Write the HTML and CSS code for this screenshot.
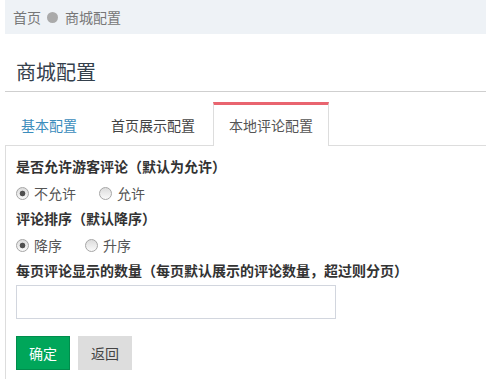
FILE: index.html
```html
<!DOCTYPE html>
<html lang="zh-CN">
<head>
    <meta charset="utf-8">
    <title>商城配置</title>
    <link rel="stylesheet" href="styles.css">
</head>
<body>
    <div class="wrapper">
        <div class="breadcrumb">
            <a href="#">首页</a>
            <span class="dot"></span>
            <span>商城配置</span>
        </div>

        <h1 class="page-title">商城配置</h1>

        <ul class="nav-tabs">
            <li><a class="link" href="#">基本配置</a></li>
            <li><a href="#">首页展示配置</a></li>
            <li class="active"><a href="#">本地评论配置</a></li>
        </ul>

        <div class="tab-content">
            <div class="form-group">
                <label class="form-label">是否允许游客评论（默认为允许）</label>
                <div class="radios">
                    <label class="radio"><input type="radio" name="guest" checked>不允许</label>
                    <label class="radio"><input type="radio" name="guest">允许</label>
                </div>
            </div>

            <div class="form-group">
                <label class="form-label">评论排序（默认降序）</label>
                <div class="radios">
                    <label class="radio"><input type="radio" name="order" checked>降序</label>
                    <label class="radio"><input type="radio" name="order">升序</label>
                </div>
            </div>

            <div class="form-group">
                <label class="form-label">每页评论显示的数量（每页默认展示的评论数量，超过则分页）</label>
                <input class="form-control" type="text">
            </div>

            <div class="buttons">
                <button class="btn btn-success">确定</button>
                <button class="btn btn-default">返回</button>
            </div>
        </div>
    </div> <!-- /wrapper -->
</body>
</html>
```

FILE: styles.css
```css
html, body {
	margin: 0;
	padding: 0;
	height: 100%;
	overflow: hidden;
	background: #fff;
}
body {
	font-family: "Noto Sans CJK SC", "Liberation Sans", sans-serif;
	font-size: 14px;
	color: #333;
}
.wrapper {
	display: flex;
	flex-direction: column;
	height: 100%;
	padding-left: 5px;
}
.breadcrumb {
	display: flex;
	align-items: center;
	flex-shrink: 0;
	height: 34px;
	padding-left: 8px;
	background-color: #eef2f6;
	color: #777;
	font-size: 14px;
	line-height: 20px;
}
.breadcrumb a {
	color: #777;
	text-decoration: none;
}
.breadcrumb .dot {
	width: 11px;
	height: 11px;
	margin: 0 7px 0 6px;
	border-radius: 50%;
	background-color: #aaa;
}
.page-title {
	margin: 0;
	padding: 24px 0 5px 11px;
	font-size: 20px;
	font-weight: normal;
	line-height: 28px;
	color: #34404c;
	border-bottom: 1px solid #cfcfcf;
}
.nav-tabs {
	display: flex;
	flex-shrink: 0;
	margin: 10px 0 0;
	padding: 0;
	list-style: none;
	border-bottom: 1px solid #ddd;
}
.nav-tabs li {
	margin-right: 2px;
	margin-bottom: -1px;
}
.nav-tabs a {
	display: block;
	padding: 10px 15px;
	line-height: 20px;
	color: #444;
	text-decoration: none;
	border: 1px solid transparent;
	border-top: 3px solid transparent;
	border-bottom: 0;
}
.nav-tabs a.link {
	color: #3c8dbc;
}
.nav-tabs .active a {
	color: #555;
	background: #fff;
	border-color: #ddd;
	border-top-color: #e9646f;
	padding-bottom: 11px;
}
.tab-content {
	flex: 1;
	padding: 10px 10px 0;
	border-left: 1px solid #ddd;
}
.form-group {
	margin-bottom: 3px;
}
.form-label {
	display: block;
	margin-bottom: 5px;
	font-weight: bold;
	line-height: 20px;
	color: #333;
}
.radios {
	display: flex;
	line-height: 24px;
	color: #555;
}
.radio {
	display: flex;
	align-items: center;
	margin-right: 23px;
}
.radio input {
	-webkit-appearance: none;
	appearance: none;
	width: 13px;
	height: 13px;
	margin: 0 5px 0 0;
	border: 1px solid #a6a6a6;
	border-radius: 50%;
	background: linear-gradient(#dcdcdc, #fafafa);
}
.radio input:checked {
	background: radial-gradient(circle, #505050 0, #505050 2.5px, transparent 3.2px), linear-gradient(#dcdcdc, #fafafa);
}
.form-control {
	display: block;
	box-sizing: border-box;
	width: 320px;
	height: 34px;
	margin: 0;
	padding: 6px 12px;
	border: 1px solid #d2d6de;
	font-size: 14px;
}
.buttons {
	display: flex;
	gap: 8px;
	margin-top: 17px;
}
.btn {
	box-sizing: border-box;
	width: 54px;
	height: 34px;
	padding: 0;
	font-family: inherit;
	font-size: 14px;
	border: 1px solid transparent;
	border-radius: 0;
}
.btn-success {
	color: #fff;
	background-color: #00a65a;
	border-color: #008d4c;
}
.btn-default {
	color: #444;
	background-color: #ddd;
	border-color: #ddd;
}
```
